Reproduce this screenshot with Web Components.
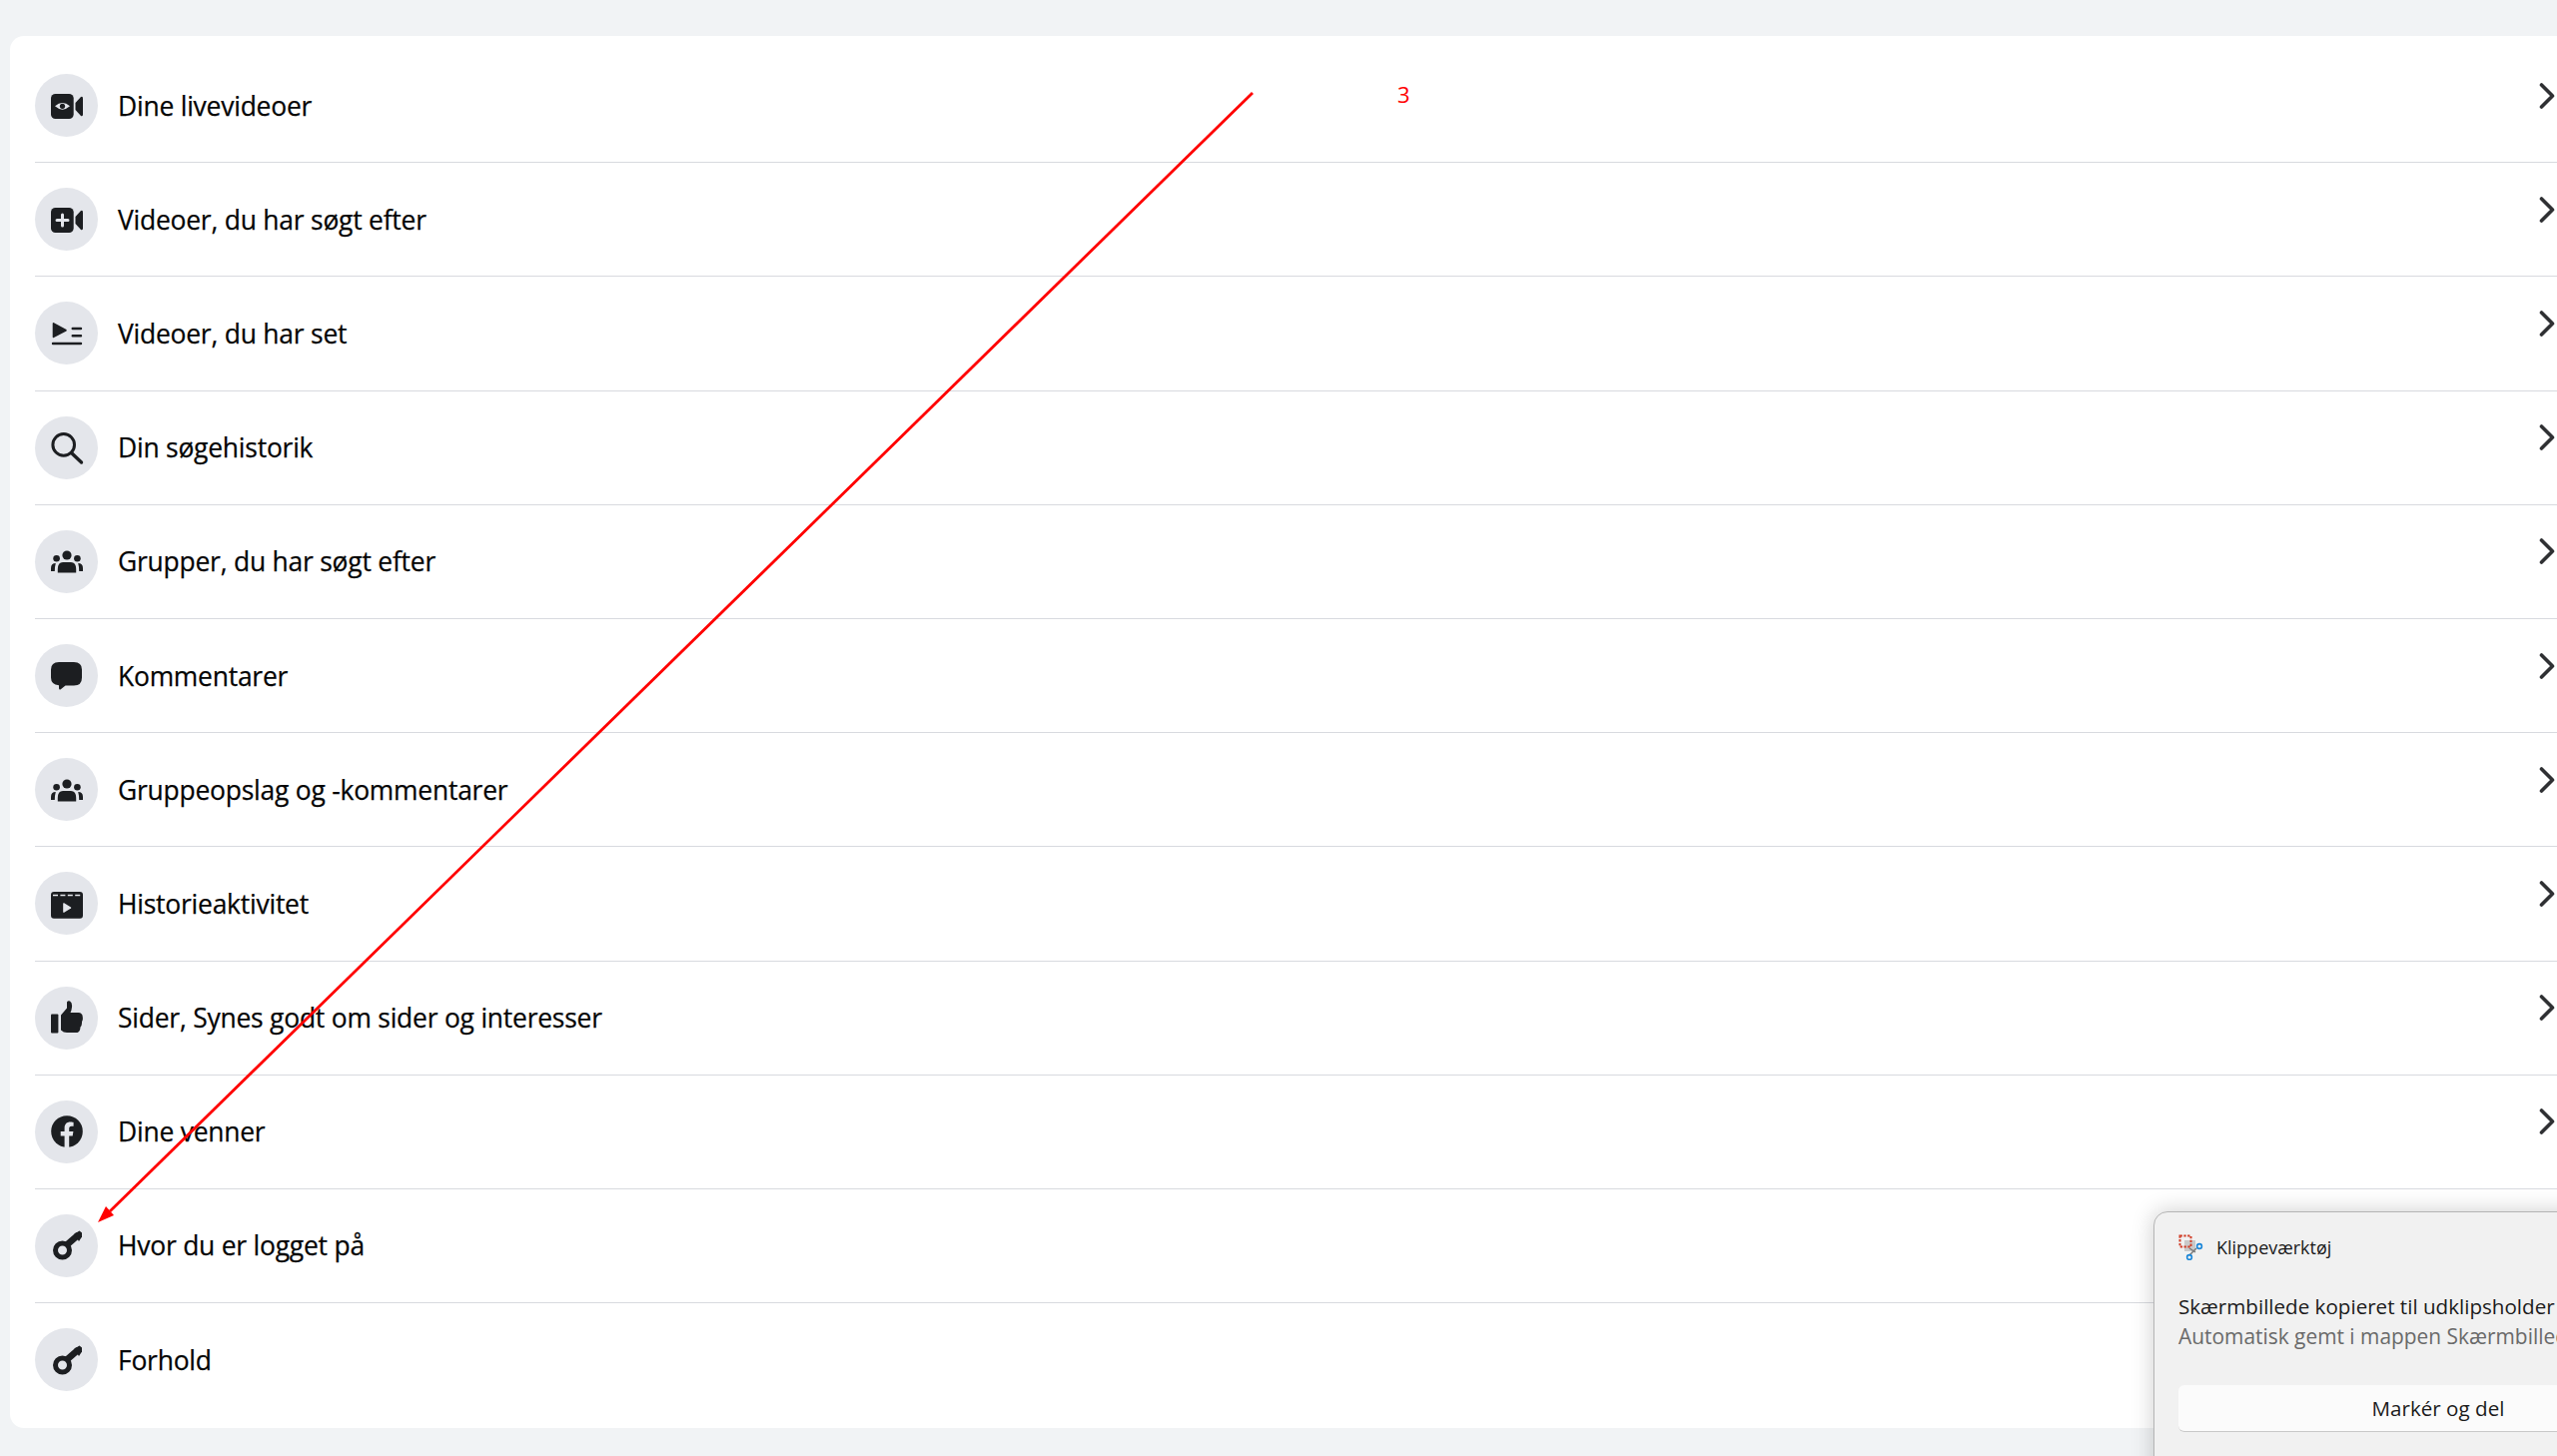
<!DOCTYPE html>
<html lang="da">
<head>
<meta charset="utf-8">
<title>Aktivitetslog</title>
<style>
html, body {
	margin: 0;
	height: 100%;
	overflow: hidden;
	background-color: #f1f3f5;
}
</style>
</head>
<body>
<activity-page>
	<activity-row icon="live">Dine livevideoer</activity-row>
	<activity-row icon="videoadd">Videoer, du har søgt efter</activity-row>
	<activity-row icon="watched">Videoer, du har set</activity-row>
	<activity-row icon="search">Din søgehistorik</activity-row>
	<activity-row icon="groups">Grupper, du har søgt efter</activity-row>
	<activity-row icon="comment">Kommentarer</activity-row>
	<activity-row icon="groups">Gruppeopslag og -kommentarer</activity-row>
	<activity-row icon="story">Historieaktivitet</activity-row>
	<activity-row icon="like">Sider, Synes godt om sider og interesser</activity-row>
	<activity-row icon="friends">Dine venner</activity-row>
	<activity-row icon="key">Hvor du er logget på</activity-row>
	<activity-row icon="key" last>Forhold</activity-row>
</activity-page>
<arrow-annotation></arrow-annotation>
<snip-toast></snip-toast>

<script>
const INK = '#1c1e21';
const CUT = '#e4e6eb';

const icons = {
	live: `
		<rect x="0" y="4" width="22.7" height="25" rx="4.5" fill="${INK}"/>
		<path d="M24.5 13 L30 7 Q32 6 32 8.5 V24.5 Q32 27 30 26 L24.5 20z" fill="${INK}"/>
		<path d="M4 16.3 Q11.5 9.5 19 16.3 Q11.5 23 4 16.3z" fill="${CUT}"/>
		<circle cx="11.5" cy="16.3" r="2.6" fill="${INK}"/>`,
	videoadd: `
		<rect x="0" y="4" width="22.7" height="25" rx="4.5" fill="${INK}"/>
		<path d="M24.5 13 L30 7 Q32 6 32 8.5 V24.5 Q32 27 30 26 L24.5 20z" fill="${INK}"/>
		<path d="M11.5 11 V22 M6 16.5 H17" stroke="${CUT}" stroke-width="3" stroke-linecap="round"/>`,
	watched: `
		<path d="M1.7 6 Q1.7 4.5 3 5.2 L15.5 12 Q16 12.7 15.5 13.4 L3 20 Q1.7 20.6 1.7 19.3z" fill="${INK}"/>
		<path d="M21.7 11 H30 M21.7 18.3 H30 M2 26 H30" stroke="${INK}" stroke-width="2.4" stroke-linecap="round"/>`,
	search: `
		<circle cx="12.7" cy="13.4" r="10.8" fill="none" stroke="${INK}" stroke-width="3"/>
		<path d="M20.5 21.5 L30.5 31" stroke="${INK}" stroke-width="3.4" stroke-linecap="round"/>`,
	groups: `
		<circle cx="16" cy="10" r="4.6" fill="${INK}"/>
		<circle cx="5.6" cy="13.2" r="3.3" fill="${INK}"/>
		<circle cx="26.4" cy="13.2" r="3.3" fill="${INK}"/>
		<path d="M6.8 27.4 V24 Q6.8 17 12 17 H20 Q25.2 17 25.2 24 V27.4z" fill="${INK}"/>
		<path d="M0 26 V23 Q0 18 4.8 18 Q3.8 21.5 3.8 26z M32 26 V23 Q32 18 27.2 18 Q28.2 21.5 28.2 26z" fill="${INK}"/>`,
	comment: `
		<path d="M8 2 H23 Q31 2 31 9.5 V17.5 Q31 25.5 23 25.5 H14.5 L9.5 29.5 Q8 30 8 28 V25.3 Q0 24.5 0 17.5 V9.5 Q0 2 8 2z" fill="${INK}"/>`,
	story: `
		<path d="M3 4 H29 Q32 4 32 7 V27.5 Q32 30.7 29 30.7 H3 Q0 30.7 0 27.5 V7 Q0 4 3 4z" fill="${INK}"/>
		<path d="M2 7.5 H30" stroke="${CUT}" stroke-width="1.6" stroke-dasharray="5 2.4"/>
		<path d="M12.2 15.8 Q12.2 14.8 13.2 15.3 L20 19.4 Q20.6 20 20 20.6 L13.2 24.7 Q12.2 25.2 12.2 24.2z" fill="${CUT}"/>`,
	like: `
		<rect x="0" y="12.5" width="7.4" height="19" rx="1" fill="${INK}"/>
		<path d="M10 13.5 L16 6.5 V0.5 Q17 -1.2 19 -0.5 Q21.5 0.8 21 5.5 Q20.5 9.5 19.5 11 H27.5 Q31.5 11.3 31.7 15 Q32.3 18.5 31 20 Q31.3 23.5 29.5 25.5 Q29.2 30 26.5 31 H16 Q12.5 31 10 28.5z" fill="${INK}"/>`,
	friends: `
		<circle cx="16" cy="16" r="15.8" fill="${INK}"/>
		<path d="M13.6 32 V20.6 H9.7 V16 H13.6 V12.6 C13.6 8.7 15.9 6.6 19.4 6.6 C21.1 6.6 22.6 6.9 22.6 6.9 V10.7 H20.7 C18.8 10.7 18.2 11.9 18.2 13.1 V16 H22.4 L21.7 20.6 H18.2 V32z" fill="${CUT}"/>`,
	key: `
		<circle cx="11.5" cy="21" r="7" fill="none" stroke="${INK}" stroke-width="5"/>
		<path d="M16 15.5 L27.5 5.5" stroke="${INK}" stroke-width="6.5"/>
		<path d="M23 5 L28.5 1.5 L31 3.5 L31 7.5 L28 12z" fill="${INK}"/>`
};

const activityPageTemplate = document.createElement('template');
activityPageTemplate.innerHTML = `
<style>
:host {
	display: block;
	padding: 36px 0 0 10px;
}
.card {
	background-color: #fff;
	border-radius: 14px 0 0 14px;
	padding: 13px 0 11px 25px;
}
</style>
<div class="card"><slot></slot></div>
`;

class ActivityPage extends HTMLElement {
	constructor() {
		super();
		this.attachShadow({mode: 'open'});
		this.shadowRoot.appendChild(activityPageTemplate.content.cloneNode(true));
	}
}

const activityRowTemplate = document.createElement('template');
activityRowTemplate.innerHTML = `
<style>
:host {
	display: flex;
	align-items: center;
	box-sizing: border-box;
	height: 114.2px;
	border-bottom: 1px solid #d8dadf;
	font: 500 26.4px "Open Sans", "Noto Sans", sans-serif;
	letter-spacing: -0.2px;
	-webkit-text-stroke: 0.25px #050505;
	color: #050505;
}
:host([last]) {
	border-bottom-color: transparent;
}
.circle {
	flex: none;
	width: 63px;
	height: 63px;
	border-radius: 50%;
	background-color: #e4e6eb;
	display: grid;
	place-items: center;
}
.circle svg {
	width: 32px;
	height: 32px;
	overflow: visible;
}
.label {
	flex: 1;
	margin-left: 20px;
}
.chevron {
	flex: none;
	width: 16px;
	height: 28px;
	margin: 0 2px 20px 0;
}
</style>
<div class="circle"><svg viewBox="0 0 32 32"></svg></div>
<div class="label"><slot></slot></div>
<svg class="chevron" viewBox="0 0 16 28"><path d="M2.5 3 L13.5 14 L2.5 25" fill="none" stroke="#2f3033" stroke-width="3.6" stroke-linecap="round" stroke-linejoin="round"/></svg>
`;

class ActivityRow extends HTMLElement {
	constructor() {
		super();
		this.attachShadow({mode: 'open'});
		this.shadowRoot.appendChild(activityRowTemplate.content.cloneNode(true));
	}

	connectedCallback() {
		this.shadowRoot.querySelector('.circle svg').innerHTML = icons[this.getAttribute('icon')];
	}
}

const arrowTemplate = document.createElement('template');
arrowTemplate.innerHTML = `
<style>
:host {
	position: absolute;
	inset: 0;
	pointer-events: none;
	display: block;
}
svg {
	position: absolute;
	inset: 0;
	width: 100%;
	height: 100%;
}
.number {
	position: absolute;
	left: 1399px;
	top: 79px;
	font: 22px "Open Sans", sans-serif;
	color: #f00;
}
</style>
<svg viewBox="0 0 2560 1458">
	<line x1="1254" y1="93" x2="110" y2="1213" stroke="#f00" stroke-width="2.8"/>
	<polygon points="98,1224 106,1208 114,1217" fill="#f00"/>
</svg>
<div class="number">3</div>
`;

class ArrowAnnotation extends HTMLElement {
	constructor() {
		super();
		this.attachShadow({mode: 'open'});
		this.shadowRoot.appendChild(arrowTemplate.content.cloneNode(true));
	}
}

const snipToastTemplate = document.createElement('template');
snipToastTemplate.innerHTML = `
<style>
:host {
	position: absolute;
	left: 2156px;
	top: 1213px;
	width: 570px;
	height: 300px;
	box-sizing: border-box;
	display: block;
	background-color: #f1f1f1;
	border: 1px solid #b5b5b5;
	border-radius: 14px;
	box-shadow: 0 0 22px rgba(0, 0, 0, 0.2);
	padding: 22px 24px 0 24px;
	font-family: "Open Sans", "Noto Sans", sans-serif;
	color: #1b1b1b;
	white-space: nowrap;
}
.head {
	display: flex;
	align-items: center;
	gap: 13px;
	font-size: 18px;
	height: 26px;
}
.head svg {
	width: 25px;
	height: 26px;
	flex: none;
}
.title {
	margin-top: 31px;
	font-size: 20.6px;
	line-height: 31px;
}
.sub {
	font-size: 20.9px;
	line-height: 29px;
	color: #6a6a6a;
}
.action {
	margin-top: 34px;
	height: 47px;
	background-color: #fbfbfb;
	border-radius: 6px;
	border-bottom: 1px solid #c9c9c9;
	box-sizing: border-box;
	display: grid;
	place-items: center;
	font-size: 20.6px;
}
</style>
<div class="head">
	<svg viewBox="0 0 25 26">
		<rect x="6" y="6" width="11" height="11" fill="#c9c9c9"/>
		<rect x="1.5" y="1.5" width="11" height="11" fill="none" stroke="#d2402a" stroke-width="2" stroke-dasharray="2.4 1.4"/>
		<path d="M11 14 L17 18 M18 14 L11 21" stroke="#7a7a7a" stroke-width="1.5"/>
		<circle cx="21" cy="12" r="2.4" fill="none" stroke="#1a86d8" stroke-width="1.6"/>
		<circle cx="11" cy="23" r="2.4" fill="none" stroke="#1a86d8" stroke-width="1.6"/>
	</svg>
	<span>Klippeværktøj</span>
</div>
<div class="title">Skærmbillede kopieret til udklipsholder</div>
<div class="sub">Automatisk gemt i mappen Skærmbilleder</div>
<div class="action">Markér og del</div>
`;

class SnipToast extends HTMLElement {
	constructor() {
		super();
		this.attachShadow({mode: 'open'});
		this.shadowRoot.appendChild(snipToastTemplate.content.cloneNode(true));
	}
}

window.customElements.define('activity-page', ActivityPage);
window.customElements.define('activity-row', ActivityRow);
window.customElements.define('arrow-annotation', ArrowAnnotation);
window.customElements.define('snip-toast', SnipToast);
</script>
</body>
</html>
